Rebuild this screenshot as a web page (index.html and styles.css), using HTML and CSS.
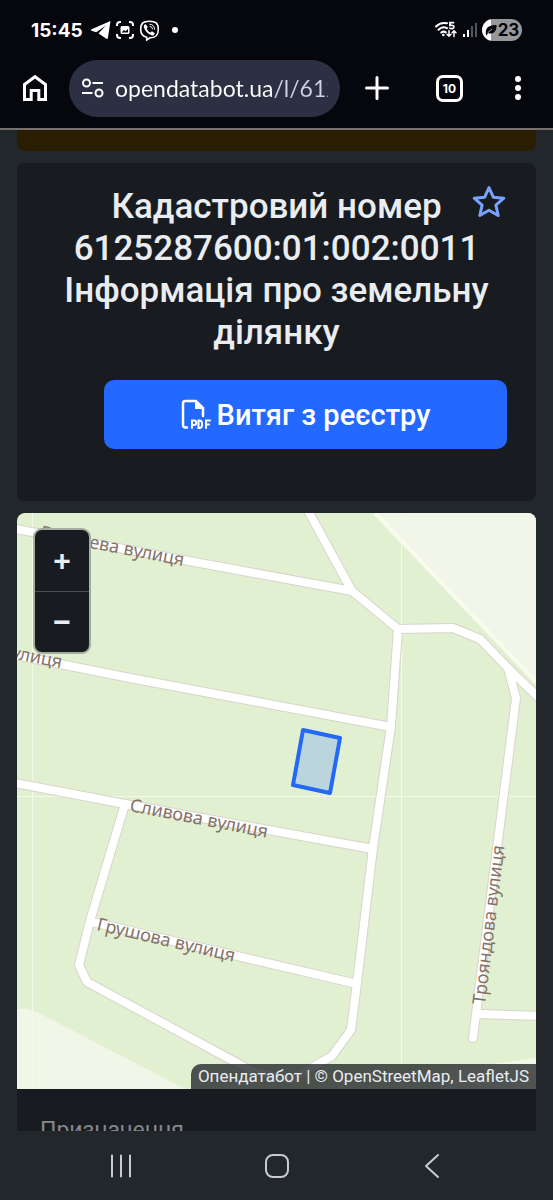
FILE: index.html
```html
<!DOCTYPE html>
<html lang="uk">
<head>
    <meta charset="UTF-8">
    <meta name="viewport" content="width=device-width, initial-scale=1.0">
    <title>Опендатабот</title>
    <link rel="stylesheet" href="styles.css">
</head>
<body>
    <header class="browser">
        <div class="status">
            <span class="time">15:45</span>
            <svg class="telegram" width="20" height="20" viewBox="0 0 20 20" fill="#fff">
                <path d="M19.500 1 0.500 9.300c-.8.400-.7 1.200.1 1.500l4.600 1.500L15 5.600 7.800 13l-.2.600 7.400 5c.9.600 1.700.3 1.900-.7L19.500 1z"/>
            </svg>
            <svg class="shot" width="20" height="20" viewBox="0 0 20 20" fill="none" stroke="#fff" stroke-width="2">
                <path d="M2 6V5a3 3 0 0 1 3-3h1M14 2h1a3 3 0 0 1 3 3v1M18 14v1a3 3 0 0 1-3 3h-1M6 18H5a3 3 0 0 1-3-3v-1"/>
                <path d="M7 6h6a1.500 1.500 0 0 1 1.500 1.500v5A1.500 1.500 0 0 1 13 14H7a1.500 1.500 0 0 1-1.500-1.500v-5A1.500 1.500 0 0 1 7 6z" fill="#fff" stroke="none"/>
                <path d="M7 12l2-2 1.500 1.200L13 9v3.500H7z" fill="#06070d" stroke="none"/>
            </svg>
            <svg class="viber" width="21" height="21" viewBox="0 0 21 21" fill="none" stroke="#fff" stroke-width="1.600" stroke-linecap="round">
                <path d="M10.500 1.200c6 0 8.800 1.800 8.800 8.300s-2.800 8.300-8.300 8.300L7.700 20v-2.700C3.500 16.300 1.700 14 1.700 9.500c0-6.500 2.800-8.300 8.800-8.300z"/>
                <path d="M5 5.300l1.600-1.200 2.200 3-1.100 1.300c.5 1.900 1.900 3.400 3.900 4.100l1.300-1.200 3 2-1.100 1.800c-.6.700-1.400.6-2.300.2-3.700-1.500-6.300-4-7.500-7.500-.3-.9-.4-1.800 0-2.500z" fill="#fff" stroke="none"/>
                <path d="M10.800 4.200c3 .2 4.700 2 4.800 5M11.200 6.600c1.400.1 2.200.9 2.300 2.300" stroke-width="1"/>
            </svg>
            <span class="dot"></span>
            <span class="spacer"></span>
            <svg class="wifi" width="24" height="18" viewBox="0 0 24 18" fill="none" stroke="#fff" stroke-width="2" stroke-linecap="round">
                <path d="M2 5.500C5.500 2 9.500 1.400 13 2.300M4.500 8.700c2.600-2.500 5.700-3 8.500-1.600M7.300 11.600c1.400-1.200 3-1.300 4.500-.2"/>
                <circle cx="9.300" cy="14" r="1.300" fill="#fff" stroke="none"/>
                <path d="M19.500 1.700h-3.600v2.800c3.500-.7 4.300.5 4 1.800-.4 1.500-2.600 1.800-4.200.8" stroke-width="1.700"/>
                <path d="M15 9.500v5.700m-2-2 2 2 2-2M20 15.500V9.800m-2 2 2-2 2 2" stroke-width="1.500"/>
            </svg>
            <svg class="signal" width="16" height="16" viewBox="0 0 16 16" fill="#fff">
                <rect x="1" y="12" width="2" height="3"/>
                <rect x="5" y="8" width="2" height="7"/>
                <rect x="9" y="4" width="2" height="11" fill="#55565c"/>
                <rect x="13" y="1" width="2" height="14" fill="#55565c"/>
            </svg>
            <span class="battery">
                <svg width="12" height="12" viewBox="0 0 12 12">
                    <path d="M1 11C-.2 4 3.500 1 11.500 1 11.800 7.500 8.500 10.500 3 9.300L1.600 11.400z" fill="#06070d"/>
                    <path d="M2.500 9 7 5" stroke="#aaa" stroke-width="1"/>
                </svg>
                23
            </span>
        </div>
        <div class="toolbar">
            <button class="icon-btn" aria-label="Home">
                <svg width="26" height="28" viewBox="0 0 26 28" fill="none" stroke="#fff" stroke-width="3">
                    <path d="M2.500 10.500 13 2.700l10.500 7.800V25.500h-6.700V16.500H9.200v9H2.500z"/>
                </svg>
            </button>
            <div class="address">
                <svg width="24" height="20" viewBox="0 0 24 20" fill="none" stroke="#fff" stroke-width="2">
                    <circle cx="5.500" cy="5" r="3.500"/>
                    <path d="M11.500 5H22M1 15h10.500"/>
                    <circle cx="18" cy="15" r="3.500"/>
                </svg>
                <input class="url" type="text" aria-label="URL" value="opendatabot.ua/l/6125287600:01:002:0011">
            </div>
            <button class="icon-btn" aria-label="New tab">
                <svg width="24" height="24" viewBox="0 0 24 24" stroke="#fff" stroke-width="3" stroke-linecap="round">
                    <path d="M12 1.500v21M1.500 12h21"/>
                </svg>
            </button>
            <button class="tabs">10</button>
            <button class="icon-btn" aria-label="Menu">
                <svg width="8" height="26" viewBox="0 0 8 26" fill="#fff">
                    <circle cx="4" cy="4" r="3"/>
                    <circle cx="4" cy="13" r="3"/>
                    <circle cx="4" cy="22" r="3"/>
                </svg>
            </button>
        </div>
    </header>

    <main class="page">
        <div class="notice"></div>

        <section class="card title-card">
            <h1>Кадастровий номер 6125287600:01:002:0011 Інформація про земельну ділянку</h1>
            <button class="star" aria-label="Додати в обране">
                <svg width="34" height="34" viewBox="0 0 34 34" fill="none" stroke="#77a3ff" stroke-width="3" stroke-linejoin="round">
                    <path d="M17 2.500l4.300 9.700 10.500 1-7.900 7 2.300 10.300L17 25.200 7.800 30.500l2.300-10.300-7.900-7 10.500-1z"/>
                </svg>
            </button>
            <a class="extract" href="#">
                <svg width="30" height="31" viewBox="0 0 30 31" fill="none" stroke="#fff" stroke-width="2" stroke-linecap="round">
                    <path d="M6 28.500H4.500A2.500 2.500 0 0 1 2 26V4.500A2.500 2.500 0 0 1 4.500 2H15l7 7v8" stroke-width="2.500"/>
                    <path d="M14 2v8h8z" fill="#fff" stroke="none"/>
                    <path d="M11 29v-7.500h2a2 2 0 0 1 0 4.500h-2M17.500 21.500V29h1a2.500 2.500 0 0 0 2.500-2.500V24a2.500 2.500 0 0 0-2.500-2.500zM25 29v-7.500h4M25 25.500h3"/>
                </svg>
                Витяг з реєстру
            </a>
        </section>

        <section class="map-card">
            <div class="map">
                <svg class="tiles" viewBox="17 513 519 576" preserveAspectRatio="xMidYMid slice">
                    <defs>
                        <g id="streets">
                            <path d="M10 528 352 591"/>
                            <path d="M306 507 352 591 398 629 453 628 480 639 508 668 540 699"/>
                            <path d="M398 629 391 726 373 848 357 983 351 1030 332 1056 290 1080"/>
                            <path d="M10 654 130 678 391 727"/>
                            <path d="M10 782 125 804 373 849"/>
                            <path d="M125 804 90 921 79 965 87 982 250 1070 290 1080"/>
                            <path d="M92 922 357 984"/>
                            <path d="M508 668 516 698 473 1038"/>
                            <path d="M478 1014 542 1016"/>
                        </g>
                    </defs>
                    <rect x="17" y="513" width="519" height="576" fill="#e1f0d0"/>
                    <path d="M375 513 536 682V513z" fill="#f2f6e8"/>
                    <path d="M375 513 536 682" stroke="#f8fbee" stroke-width="4"/>
                    <path d="M17 1009q10-2 20 3l148 77H17z" fill="#f2f6e8"/>
                    <path d="M440 1071 536 1058v31h-96z" fill="#f2f6e8"/>
                    <path d="M32.500 513v576M401.500 513v576M17 796.500h519" stroke="#f4faea" stroke-width="1"/>

                    <!-- streets: casing first, white fill over it -->
                    <g fill="none" stroke-linecap="round" stroke-linejoin="round">
                        <use href="#streets" stroke="#d9d4cd" stroke-width="10"/>
                        <use href="#streets" stroke="#fff" stroke-width="8"/>
                    </g>

                    <path d="M303 730 340 738 330 793 293 785z" fill="#bad5dc" stroke="#2469f6" stroke-width="4" stroke-linejoin="round"/>

                    <g class="street-name">
                        <text transform="translate(183 566) rotate(11)" text-anchor="end">Вишнева вулиця</text>
                        <text transform="translate(61 668) rotate(11)" text-anchor="end">Яблунева вулиця</text>
                        <text transform="translate(129 811) rotate(11)">Сливова вулиця</text>
                        <text transform="translate(96 930) rotate(13)">Грушова вулиця</text>
                        <text transform="translate(485 1005) rotate(-83)">Трояндова вулиця</text>
                    </g>
                </svg>
                <div class="zoom">
                    <button aria-label="Zoom in">+</button>
                    <button aria-label="Zoom out">−</button>
                </div>
                <div class="attribution">
                    <a href="#">Опендатабот</a> | © <a href="#">OpenStreetMap</a>, <a href="#">LeafletJS</a>
                </div>
            </div>
            <p class="label">Призначення</p>
        </section>
    </main>

    <nav class="system-nav">
        <button aria-label="Recent apps">
            <svg width="24" height="26" viewBox="0 0 24 26" stroke="#c9cbce" stroke-width="2" stroke-linecap="round">
                <path d="M3 2.500v21M12 2.500v21M21 2.500v21"/>
            </svg>
        </button>
        <button aria-label="Home screen">
            <svg width="26" height="26" viewBox="0 0 26 26" fill="none" stroke="#c9cbce" stroke-width="2">
                <rect x="2" y="2" width="22" height="22" rx="7"/>
            </svg>
        </button>
        <button aria-label="Back">
            <svg width="18" height="26" viewBox="0 0 18 26" fill="none" stroke="#c9cbce" stroke-width="2" stroke-linecap="round" stroke-linejoin="round">
                <path d="M15 2 3 13l12 11"/>
            </svg>
        </button>
    </nav>
</body>
</html>
```

FILE: styles.css
```css
* {
    padding: 0;
    margin: 0;
    box-sizing: border-box;
}
body {
    height: 100vh;
    display: flex;
    flex-direction: column;
    background-color: #22272b;
    color: #e9ecf1;
    font-family: Roboto, sans-serif;
    overflow: hidden;
}
svg {
    display: block;
    flex-shrink: 0;
}
button {
    border: none;
    background: transparent;
    color: inherit;
    font-family: inherit;
    cursor: pointer;
}
a {
    color: inherit;
    text-decoration: none;
}

/* browser */
.browser {
    background-color: #06070d;
    border-bottom: 2px solid #77706f;
}
.status {
    height: 60px;
    padding: 0 31px;
    display: flex;
    align-items: center;
    gap: 4px;
}
.time {
    font-family: Inter, sans-serif;
    font-size: 19px;
    font-weight: 700;
    color: #fff;
    margin-right: 4px;
}
.dot {
    width: 6px;
    height: 6px;
    border-radius: 50%;
    background-color: #fff;
    margin-left: 8px;
}
.spacer {
    flex: 1;
}
.battery {
    width: 40px;
    height: 22px;
    border-radius: 11px;
    background: linear-gradient(to right, #fff 9px, #97989c 9px);
    color: #06070d;
    font-family: Inter, sans-serif;
    font-size: 17px;
    font-weight: 700;
    display: flex;
    align-items: center;
    justify-content: center;
    gap: 1px;
}
.toolbar {
    height: 68px;
    padding: 0 31px 12px 22px;
    display: flex;
    align-items: center;
}
.icon-btn {
    display: flex;
}
.address {
    flex: 1;
    min-width: 0;
    height: 57px;
    margin: 0 25px 0 21px;
    border-radius: 29px;
    background-color: #2d2f42;
    padding: 0 12px;
    display: flex;
    align-items: center;
    gap: 10px;
}
.url {
    flex: 1;
    min-width: 0;
    border: none;
    outline: none;
    font-family: Lato, sans-serif;
    font-size: 23px;
    color: transparent;
    background: linear-gradient(to right, #fff 159px, #cfd1e6 159px);
    -webkit-background-clip: text;
    background-clip: text;
}
.tabs {
    width: 27px;
    height: 27px;
    margin: 0 51px 0 47px;
    border: 3px solid #fff;
    border-radius: 7px;
    color: #fff;
    font-family: Inter, sans-serif;
    font-size: 12px;
    font-weight: 700;
}

/* page */
.page {
    flex: 1;
    min-height: 0;
    overflow: hidden;
    padding: 0 17px;
    display: flex;
    flex-direction: column;
    gap: 12px;
}
.notice {
    height: 21px;
    flex-shrink: 0;
    background-color: #2b1d01;
    border-radius: 0 0 8px 8px;
}
.card {
    background-color: #181c20;
    border-radius: 8px;
}
.title-card {
    position: relative;
    flex-shrink: 0;
    padding: 23px 29px 52px;
}
h1 {
    font-size: 35px;
    font-weight: 500;
    line-height: 42px;
    text-align: center;
    padding: 0 16px;
}
.star {
    position: absolute;
    top: 22px;
    right: 30px;
}
.extract {
    height: 69px;
    margin: 26px 0 0 58px;
    border-radius: 10px;
    background-color: #2469ff;
    color: #fff;
    font-size: 29px;
    font-weight: 500;
    display: flex;
    align-items: center;
    justify-content: center;
    gap: 6px;
}
.map-card {
    flex-shrink: 0;
    background-color: #181c20;
    border-radius: 8px 8px 0 0;
    overflow: hidden;
}
.map {
    position: relative;
    height: 576px;
}
.tiles {
    width: 100%;
    height: 100%;
}
.street-name {
    font-family: "Noto Sans", sans-serif;
    font-size: 18px;
    fill: #857267;
}
.zoom {
    position: absolute;
    top: 15px;
    left: 16px;
    border: 2px solid #a5aca0;
    border-radius: 9px;
    background-color: #181c20;
    display: flex;
    flex-direction: column;
}
.zoom button {
    width: 54px;
    height: 61px;
    font-family: "Liberation Sans", sans-serif;
    font-size: 30px;
    font-weight: 700;
}
.zoom button + button {
    border-top: 1px solid #4a4e52;
}
.attribution {
    position: absolute;
    right: 0;
    bottom: 0;
    padding: 0 7px;
    border-radius: 10px 0 0 0;
    background-color: rgba(24, 28, 32, 0.75);
    font-size: 17px;
    line-height: 25px;
}
.label {
    padding: 28px 23px;
    font-size: 23px;
    color: #85888c;
}

/* system navigation */
.system-nav {
    height: 69px;
    flex-shrink: 0;
    padding: 0 43px;
    display: flex;
    align-items: center;
}
.system-nav button {
    flex: 1;
    display: flex;
    justify-content: center;
}
```
